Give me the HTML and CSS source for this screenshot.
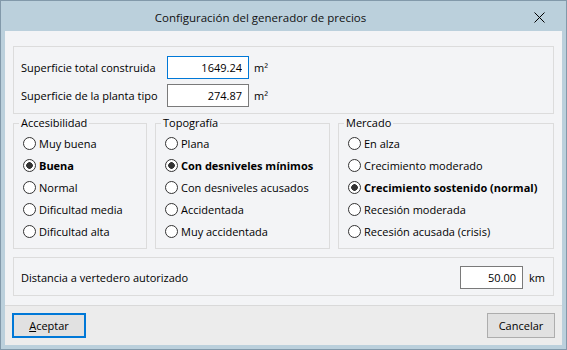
FILE: index.html
```html
<!DOCTYPE html>
<html lang="es">
  <head>
    <meta charset="UTF-8" />
    <title>Configuración del generador de precios</title>
    <link rel="stylesheet" href="styles.css">
  </head>
  <body>
    <div class="window">
      <div class="titlebar">
        <span class="title">Configuración del generador de precios</span>
        <span class="close">
          <svg width="11" height="11" viewBox="0 0 11 11">
            <path d="M0.5 0.5 L10.5 10.5 M10.5 0.5 L0.5 10.5" stroke="#000" stroke-width="1" fill="none" />
          </svg>
        </span>
      </div>

      <div class="content">
        <div class="panel surfaces">
          <div class="field_row">
            <label class="field_label">Superficie total construida</label
            ><input class="num focused" type="text" value="1649.24" /><span class="unit">m²</span>
          </div>
          <div class="field_row">
            <label class="field_label">Superficie de la planta tipo</label
            ><input class="num" type="text" value="274.87" /><span class="unit">m²</span>
          </div>
        </div>

        <div class="groups">
          <fieldset class="group">
            <legend>Accesibilidad</legend>
            <label class="option"><input type="radio" name="acc" />Muy buena</label>
            <label class="option selected"><input type="radio" name="acc" checked />Buena</label>
            <label class="option"><input type="radio" name="acc" />Normal</label>
            <label class="option"><input type="radio" name="acc" />Dificultad media</label>
            <label class="option"><input type="radio" name="acc" />Dificultad alta</label>
          </fieldset>

          <fieldset class="group">
            <legend>Topografía</legend>
            <label class="option"><input type="radio" name="topo" />Plana</label>
            <label class="option selected"><input type="radio" name="topo" checked />Con desniveles mínimos</label>
            <label class="option"><input type="radio" name="topo" />Con desniveles acusados</label>
            <label class="option"><input type="radio" name="topo" />Accidentada</label>
            <label class="option"><input type="radio" name="topo" />Muy accidentada</label>
          </fieldset>

          <fieldset class="group">
            <legend>Mercado</legend>
            <label class="option"><input type="radio" name="mercado" />En alza</label>
            <label class="option"><input type="radio" name="mercado" />Crecimiento moderado</label>
            <label class="option selected"><input type="radio" name="mercado" checked />Crecimiento sostenido (normal)</label>
            <label class="option"><input type="radio" name="mercado" />Recesión moderada</label>
            <label class="option"><input type="radio" name="mercado" />Recesión acusada (crisis)</label>
          </fieldset>
        </div>

        <div class="panel distance">
          <label class="distance_label">Distancia a vertedero autorizado</label>
          <input class="num short" type="text" value="50.00" />
          <span class="unit km">km</span>
        </div>
      </div>

      <div class="footer">
        <button class="default_button"><u>A</u>ceptar</button>
        <button class="cancel_button">Cancelar</button>
      </div>
    </div>
  </body>
</html>
```

FILE: styles.css
```css
* {
  margin: 0;
  padding: 0;
  box-sizing: border-box;
}
body {
  font-family: "Open Sans", "Noto Sans", sans-serif;
  font-size: 11px;
  color: #000;
  background-color: #bbd0dc;
}
.window {
  width: 567px;
  height: 350px;
  border: 1px solid #8299aa;
  background-color: #bbd0dc;
  padding: 0 4px 4px 4px;
  display: flex;
  flex-direction: column;
}
.titlebar {
  height: 30px;
  padding-top: 3px;
  display: flex;
  align-items: center;
}
.title {
  flex: 1;
  text-align: center;
  font-size: 11.5px;
  color: #111;
}
.close {
  width: 46px;
  display: flex;
  justify-content: center;
  align-items: center;
}
.close svg {
  display: block;
}
.content {
  height: 274px;
  background-color: #f3f4f6;
  padding: 15px 8px 9px 8px;
}
.panel {
  border: 1px solid #dcdcdc;
}
.surfaces {
  height: 68px;
  padding: 9px 0 6px 7px;
  display: flex;
  flex-direction: column;
  gap: 5px;
}
.field_row {
  display: flex;
  align-items: center;
  height: 23px;
}
.field_label {
  width: 146px;
}
input.num {
  height: 23px;
  width: 82px;
  border: 1px solid #7a7a7a;
  background-color: white;
  font-family: inherit;
  font-size: 11px;
  text-align: right;
  padding: 0 6px 1px 0;
  outline: none;
}
input.focused {
  border-color: #0078d7;
}
.unit {
  margin-left: 5px;
}
.groups {
  margin-top: 1px;
  display: grid;
  grid-template-columns: 134px 175px 1fr;
  gap: 8px;
  height: 134px;
}
.group {
  border: 1px solid #dcdcdc;
  padding: 1px 4px 5px 5px;
  min-width: 0;
}
.group legend {
  padding: 0 2px;
  line-height: 16px;
}
.option {
  display: flex;
  align-items: center;
  height: 22px;
  white-space: nowrap;
}
.option.selected {
  font-weight: bold;
}
.option input {
  appearance: none;
  -webkit-appearance: none;
  width: 13px;
  height: 13px;
  border: 1px solid #333;
  border-radius: 50%;
  background-color: white;
  margin: 0 3px 0 4px;
  flex-shrink: 0;
}
.option input:checked {
  background: radial-gradient(circle, #333 0, #333 3px, white 3.6px);
}
.distance {
  margin-top: 8px;
  height: 39px;
  padding: 8px 9px 6px 7px;
  display: flex;
  align-items: center;
}
.distance_label {
  flex: 1;
}
input.short {
  width: 63px;
}
.km {
  margin-left: 6px;
  width: 15px;
}
.footer {
  height: 40px;
  border-top: 1px solid #d9d9d9;
  background-color: #ececec;
  padding: 7px 7px 0 7px;
  display: flex;
  justify-content: space-between;
  align-items: flex-start;
}
.footer button {
  height: 25px;
  background-color: #e1e1e1;
  border: 1px solid #adadad;
  font-family: inherit;
  font-size: 11px;
  color: #000;
}
.default_button {
  width: 74px;
  border: 2px solid #0078d7 !important;
}
.cancel_button {
  width: 68px;
}
```
